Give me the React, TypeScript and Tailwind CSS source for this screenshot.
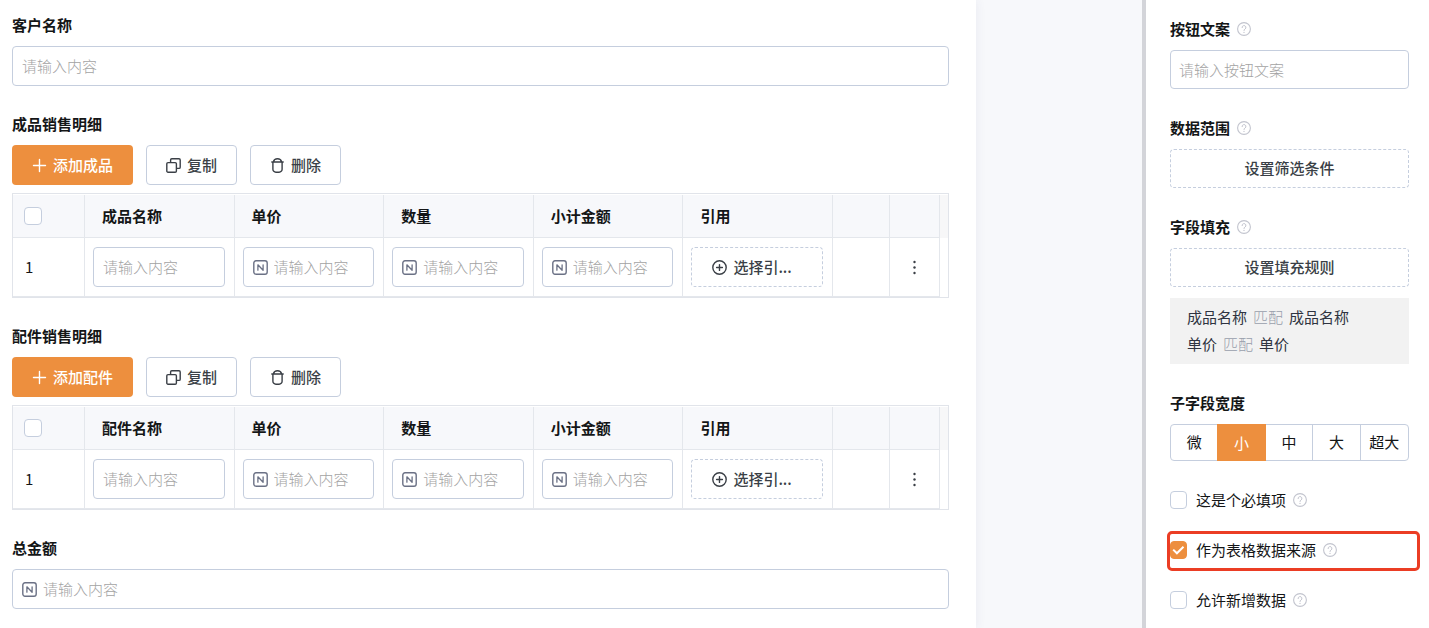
import { useState } from 'react'
import type { ReactNode } from 'react'

type DetailTableProps = {
  title: string;
  addText: string;
  nameHeader: string;
};

const inputBox =
  'flex items-center gap-[6px] h-10 w-full px-[9px] bg-white border border-[#c5cede] rounded focus-within:border-[#ed8f3e]';
const inputText =
  'min-w-0 flex-1 bg-transparent outline-none font-light text-[#141617] placeholder:text-[#a3a3a3] placeholder:opacity-100';
const outlineButton =
  'flex items-center gap-[6px] h-10 px-[19px] bg-white border border-[#c5cede] rounded font-medium text-[#3a3f46]';
const dashedButton =
  'w-full h-[39px] pb-[2px] bg-white border border-dashed border-[#c5cede] rounded font-medium text-[#3a3f46]';

const NumberIcon = () => (
  <svg className="w-[15px] h-[15px] shrink-0" viewBox="0 0 15 15" fill="none" stroke="#6b7185" strokeLinejoin="round" strokeLinecap="round">
    <rect x="0.8" y="0.8" width="13.4" height="13.4" rx="2.2" strokeWidth="1.4" />
    <path d="M4.9 10.2V4.8l5.2 5.4V4.8" strokeWidth="1.3" />
  </svg>
);

const PlusIcon = () => (
  <svg className="w-[15px] h-[15px]" viewBox="0 0 15 15" stroke="currentColor" strokeWidth="1.4" strokeLinecap="round">
    <path d="M7.5 1.5v12M1.5 7.5h12" />
  </svg>
);

const CopyIcon = () => (
  <svg className="w-[15px] h-[15px]" viewBox="0 0 15 15" fill="none" stroke="currentColor" strokeWidth="1.4" strokeLinejoin="round">
    <rect x="0.8" y="4.6" width="9.6" height="9.6" rx="1.2" />
    <path d="M4.6 4.4V2a1.2 1.2 0 0 1 1.2-1.2H13A1.2 1.2 0 0 1 14.2 2v7.2a1.2 1.2 0 0 1-1.2 1.2h-2.4" />
  </svg>
);

const TrashIcon = () => (
  <svg className="w-[15px] h-[15px]" viewBox="0 0 15 15" fill="none" stroke="currentColor" strokeWidth="1.4" strokeLinecap="round" strokeLinejoin="round">
    <path d="M1.8 4h11.4M3.4 3.8C3.9 1.8 5.3 0.8 7.5 0.8s3.6 1 4.1 3M2.9 4.2v7a3 3 0 0 0 3 3h3.2a3 3 0 0 0 3-3v-7" />
  </svg>
);

const HelpIcon = () => (
  <svg className="w-[14px] h-[14px] shrink-0" viewBox="0 0 14 14" fill="none" stroke="#c2c4ce" strokeLinecap="round">
    <circle cx="7" cy="7" r="6.4" strokeWidth="1.1" />
    <path d="M5.1 5.6a1.9 1.9 0 1 1 2.9 1.5c-.7.4-1 .7-1 1.4" strokeWidth="1" />
    <path d="M7 10.3v.1" strokeWidth="1.2" />
  </svg>
);

const CircleAddIcon = () => (
  <svg className="w-[15px] h-[15px] shrink-0" viewBox="0 0 15 15" fill="none" stroke="currentColor" strokeWidth="1.4" strokeLinecap="round">
    <circle cx="7.5" cy="7.5" r="6.7" />
    <path d="M7.5 4.6v5.8M4.6 7.5h5.8" />
  </svg>
);

const MoreIcon = () => (
  <svg className="w-[15px] h-[15px]" viewBox="0 0 15 15" fill="currentColor">
    <circle cx="7.5" cy="2" r="1.2" />
    <circle cx="7.5" cy="7.5" r="1.2" />
    <circle cx="7.5" cy="13" r="1.2" />
  </svg>
);

const NumberInput = ({ label, id }: { label?: string; id?: string }) => (
  <div className={inputBox}>
    <NumberIcon />
    <input id={id} aria-label={label} inputMode="decimal" placeholder="请输入内容" className={inputText} />
  </div>
);

const DetailTable = ({ title, addText, nameHeader }: DetailTableProps) => {
  const headers = [nameHeader, '单价', '数量', '小计金额', '引用'];

  return (
    <section>
      <h2 className="mb-[10px] leading-[22px] font-bold">{title}</h2>
      <div className="flex gap-[13px] mb-2">
        <button type="button" className="flex items-center gap-[6px] h-10 px-5 rounded bg-[#ed8f3e] font-medium text-white">
          <PlusIcon />
          {addText}
        </button>
        <button type="button" className={outlineButton}>
          <CopyIcon />
          复制
        </button>
        <button type="button" className={outlineButton}>
          <TrashIcon />
          删除
        </button>
      </div>
      <div className="border border-[#e1e4ea] pt-px flex">
        <table className="w-full table-fixed border-separate border-spacing-0">
          <colgroup>
            <col className="w-[72px]" />
            <col />
            <col />
            <col />
            <col />
            <col />
            <col className="w-[57px]" />
            <col className="w-[50px]" />
          </colgroup>
          <thead>
            <tr className="h-[43px] bg-[#f7f8fb] text-left">
              <th className="pl-[11px] border-r border-b border-[#e4e7ec]">
                <input
                  type="checkbox"
                  aria-label="全选"
                  className="block appearance-none w-[18px] h-[18px] bg-white border border-[#c5cede] rounded checked:bg-[#ed8f3e]"
                />
              </th>
              {headers.map((header) => (
                <th key={header} className="pl-[17px] border-r border-b border-[#e4e7ec] font-bold">
                  {header}
                </th>
              ))}
              <th className="border-r border-b border-[#e4e7ec]" />
              <th className="border-r border-b border-[#e4e7ec]" />
            </tr>
          </thead>
          <tbody>
            <tr className="h-[59px]">
              <td className="pl-3 border-r border-b border-[#e4e7ec]">1</td>
              <td className="pl-2 pr-[9px] border-r border-b border-[#e4e7ec]">
                <div className={inputBox}>
                  <input aria-label={nameHeader} placeholder="请输入内容" className={inputText} />
                </div>
              </td>
              {headers.slice(1, 4).map((header) => (
                <td key={header} className="pl-2 pr-[9px] border-r border-b border-[#e4e7ec]">
                  <NumberInput label={header} />
                </td>
              ))}
              <td className="pl-2 pr-[9px] border-r border-b border-[#e4e7ec]">
                <button
                  type="button"
                  className="flex items-center gap-[6px] w-full h-10 pl-5 bg-white border border-dashed border-[#c5cede] rounded font-medium text-[#3a3f46]"
                >
                  <CircleAddIcon />
                  选择引...
                </button>
              </td>
              <td className="border-r border-b border-[#e4e7ec]" />
              <td className="border-r border-b border-[#e4e7ec]">
                <button type="button" aria-label="更多" className="block mx-auto text-[#3a3f46]">
                  <MoreIcon />
                </button>
              </td>
            </tr>
          </tbody>
        </table>
        <div className="w-2 h-[43px] shrink-0 bg-[#f7f7f8]" />
      </div>
    </section>
  );
};

const SettingLabel = ({ children }: { children: ReactNode }) => (
  <div className="flex items-center gap-[7px] mb-[10px] leading-[22px] font-bold">{children}</div>
);

const MatchRule = ({ from, to }: { from: string; to: string }) => (
  <p className="flex gap-[6px]">
    {from}
    <span className="font-light text-[#989eab]">匹配</span>
    {to}
  </p>
);

const CheckOption = ({ label, defaultChecked = false }: { label: string; defaultChecked?: boolean }) => (
  <div className="flex items-center gap-[7px] h-[22px]">
    <label className="flex items-center gap-[9px]">
      <span className="grid">
        <input
          type="checkbox"
          defaultChecked={defaultChecked}
          className="peer [grid-area:1/1] appearance-none w-[17px] h-[18px] bg-white border border-[#c5cede] rounded checked:bg-[#ed8f3e] checked:border-[#ed8f3e]"
        />
        <svg className="[grid-area:1/1] w-[17px] h-[18px] pointer-events-none invisible peer-checked:visible" viewBox="0 0 17 18" fill="none" stroke="#fff" strokeWidth="2">
          <path d="M3.2 8.6l3.7 3.7 6.6-6.6" />
        </svg>
      </span>
      {label}
    </label>
    <HelpIcon />
  </div>
);

const widths = ['微', '小', '中', '大', '超大'];

const App = () => {
  const [width, setWidth] = useState('小');

  return (
    <div className="flex min-h-screen bg-[#f7f8fb] font-['Noto_Sans_CJK_SC',sans-serif] text-[15px] leading-[22px] text-[#141617]">
      <main className="flex-1 min-w-0 flex flex-col gap-[27px] pt-[14px] pl-3 pr-[27px] pb-5 bg-white shadow-[0_0_10px_rgba(60,70,120,0.08)]">
        <div>
          <label htmlFor="customer" className="block mb-[10px] leading-[22px] font-bold">
            客户名称
          </label>
          <div className={inputBox}>
            <input id="customer" placeholder="请输入内容" className={inputText} />
          </div>
        </div>
        <DetailTable title="成品销售明细" addText="添加成品" nameHeader="成品名称" />
        <DetailTable title="配件销售明细" addText="添加配件" nameHeader="配件名称" />
        <div>
          <label htmlFor="total" className="block mb-[10px] leading-[22px] font-bold">
            总金额
          </label>
          <NumberInput id="total" />
        </div>
      </main>

      <aside className="flex flex-col gap-7 w-[287px] shrink-0 ml-[166px] pt-[18px] pl-6 pr-5 pb-4 bg-white border-l-4 border-[#d3d4d9]">
        <div>
          <SettingLabel>
            <label htmlFor="button-text">按钮文案</label>
            <HelpIcon />
          </SettingLabel>
          <input
            id="button-text"
            placeholder="请输入按钮文案"
            className="w-full h-[39px] px-2 border border-[#c5cede] rounded outline-none font-light placeholder:text-[#a3a3a3] placeholder:opacity-100 focus:border-[#ed8f3e]"
          />
        </div>
        <div>
          <SettingLabel>
            数据范围
            <HelpIcon />
          </SettingLabel>
          <button type="button" className={dashedButton}>设置筛选条件</button>
        </div>
        <div>
          <SettingLabel>
            字段填充
            <HelpIcon />
          </SettingLabel>
          <button type="button" className={dashedButton}>设置填充规则</button>
          <div className="mt-[11px] px-[17px] pt-[5px] pb-[7px] bg-[#f2f2f2] leading-[27px] text-[#2f3441]">
            <MatchRule from="成品名称" to="成品名称" />
            <MatchRule from="单价" to="单价" />
          </div>
        </div>
        <div>
          <SettingLabel>子字段宽度</SettingLabel>
          <div className="grid grid-cols-5 h-[37px] border border-[#c5cede] rounded" role="group" aria-label="子字段宽度">
            {widths.map((item) => (
              <button
                key={item}
                type="button"
                aria-pressed={item === width}
                onClick={() => setWidth(item)}
                className={
                  item === width
                    ? '-my-px -ml-px bg-[#ed8f3e] text-white'
                    : 'pb-[2px] border-r border-[#c5cede] last:border-r-0'
                }
              >
                {item}
              </button>
            ))}
          </div>
        </div>
        <CheckOption label="这是个必填项" />
        <div className="relative">
          <CheckOption label="作为表格数据来源" defaultChecked />
          <div className="absolute -top-2 -bottom-[10px] -left-[3px] -right-[11px] border-3 border-[#eb3d24] rounded-[5px] pointer-events-none" />
        </div>
        <CheckOption label="允许新增数据" />
      </aside>
    </div>
  );
};

export default App;
